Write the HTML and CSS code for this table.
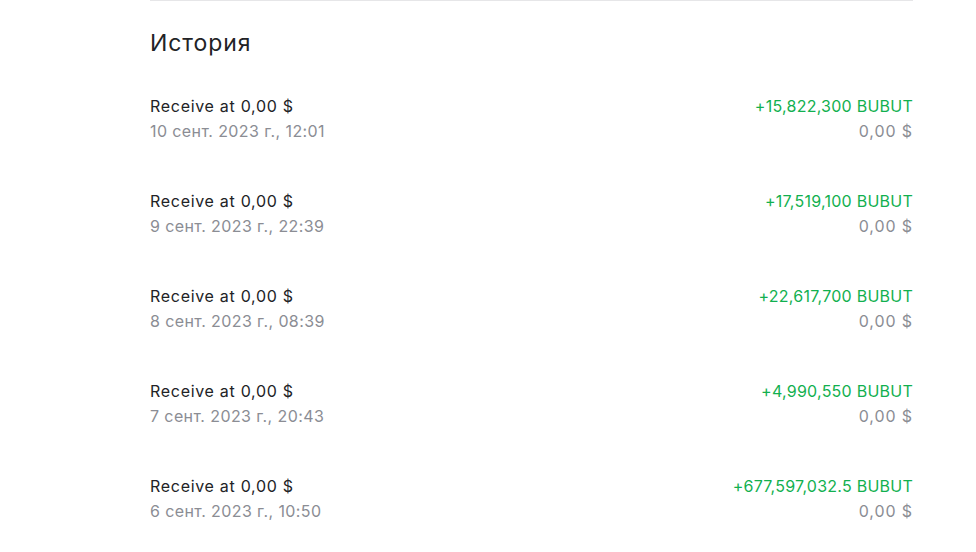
FILE: index.html
```html
<!DOCTYPE html>
<html lang="ru">
<head>
<meta charset="utf-8">
<link rel="stylesheet" href="styles.css">
</head>
<body>
<main class="wrap">
  <h2 class="title">История</h2>
  <ul class="list">
    <li class="row">
      <div class="left"><div class="name">Receive at 0,00 $</div><div class="date">10 сент. 2023 г., 12:01</div></div>
      <div class="right"><div class="amount">+15,822,300 BUBUT</div><div class="usd">0,00 $</div></div>
    </li>
    <li class="row">
      <div class="left"><div class="name">Receive at 0,00 $</div><div class="date">9 сент. 2023 г., 22:39</div></div>
      <div class="right"><div class="amount">+17,519,100 BUBUT</div><div class="usd">0,00 $</div></div>
    </li>
    <li class="row">
      <div class="left"><div class="name">Receive at 0,00 $</div><div class="date">8 сент. 2023 г., 08:39</div></div>
      <div class="right"><div class="amount">+22,617,700 BUBUT</div><div class="usd">0,00 $</div></div>
    </li>
    <li class="row">
      <div class="left"><div class="name">Receive at 0,00 $</div><div class="date">7 сент. 2023 г., 20:43</div></div>
      <div class="right"><div class="amount">+4,990,550 BUBUT</div><div class="usd">0,00 $</div></div>
    </li>
    <li class="row">
      <div class="left"><div class="name">Receive at 0,00 $</div><div class="date">6 сент. 2023 г., 10:50</div></div>
      <div class="right"><div class="amount">+677,597,032.5 BUBUT</div><div class="usd">0,00 $</div></div>
    </li>
  </ul>
</main>
</body>
</html>
```
FILE: styles.css
```css
html, body { margin: 0; padding: 0; background: #fff; }
body { font-family: Inter, "Noto Sans", sans-serif; color: #222326; }
.wrap {
  margin-left: 150px;
  width: 763px;
  border-top: 1px solid #e6e6e8;
}
.title {
  margin: 0;
  padding-top: 27px;
  font-size: 23px;
  font-weight: 400;
  line-height: 30px;
  letter-spacing: 0.9px;
}
.list { list-style: none; margin: 0; padding: 0; padding-top: 36px; }
.row {
  display: flex;
  justify-content: space-between;
  height: 95px;
}
.left, .right { font-size: 16px; line-height: 25px; letter-spacing: 0.4px; }
.right { text-align: right; }
.name { color: #222326; letter-spacing: 0.7px; }
.date { color: #8b8d94; }
.amount { color: #12b04f; letter-spacing: 0.25px; }
.usd { color: #8b8d94; letter-spacing: 0.9px; }
```
